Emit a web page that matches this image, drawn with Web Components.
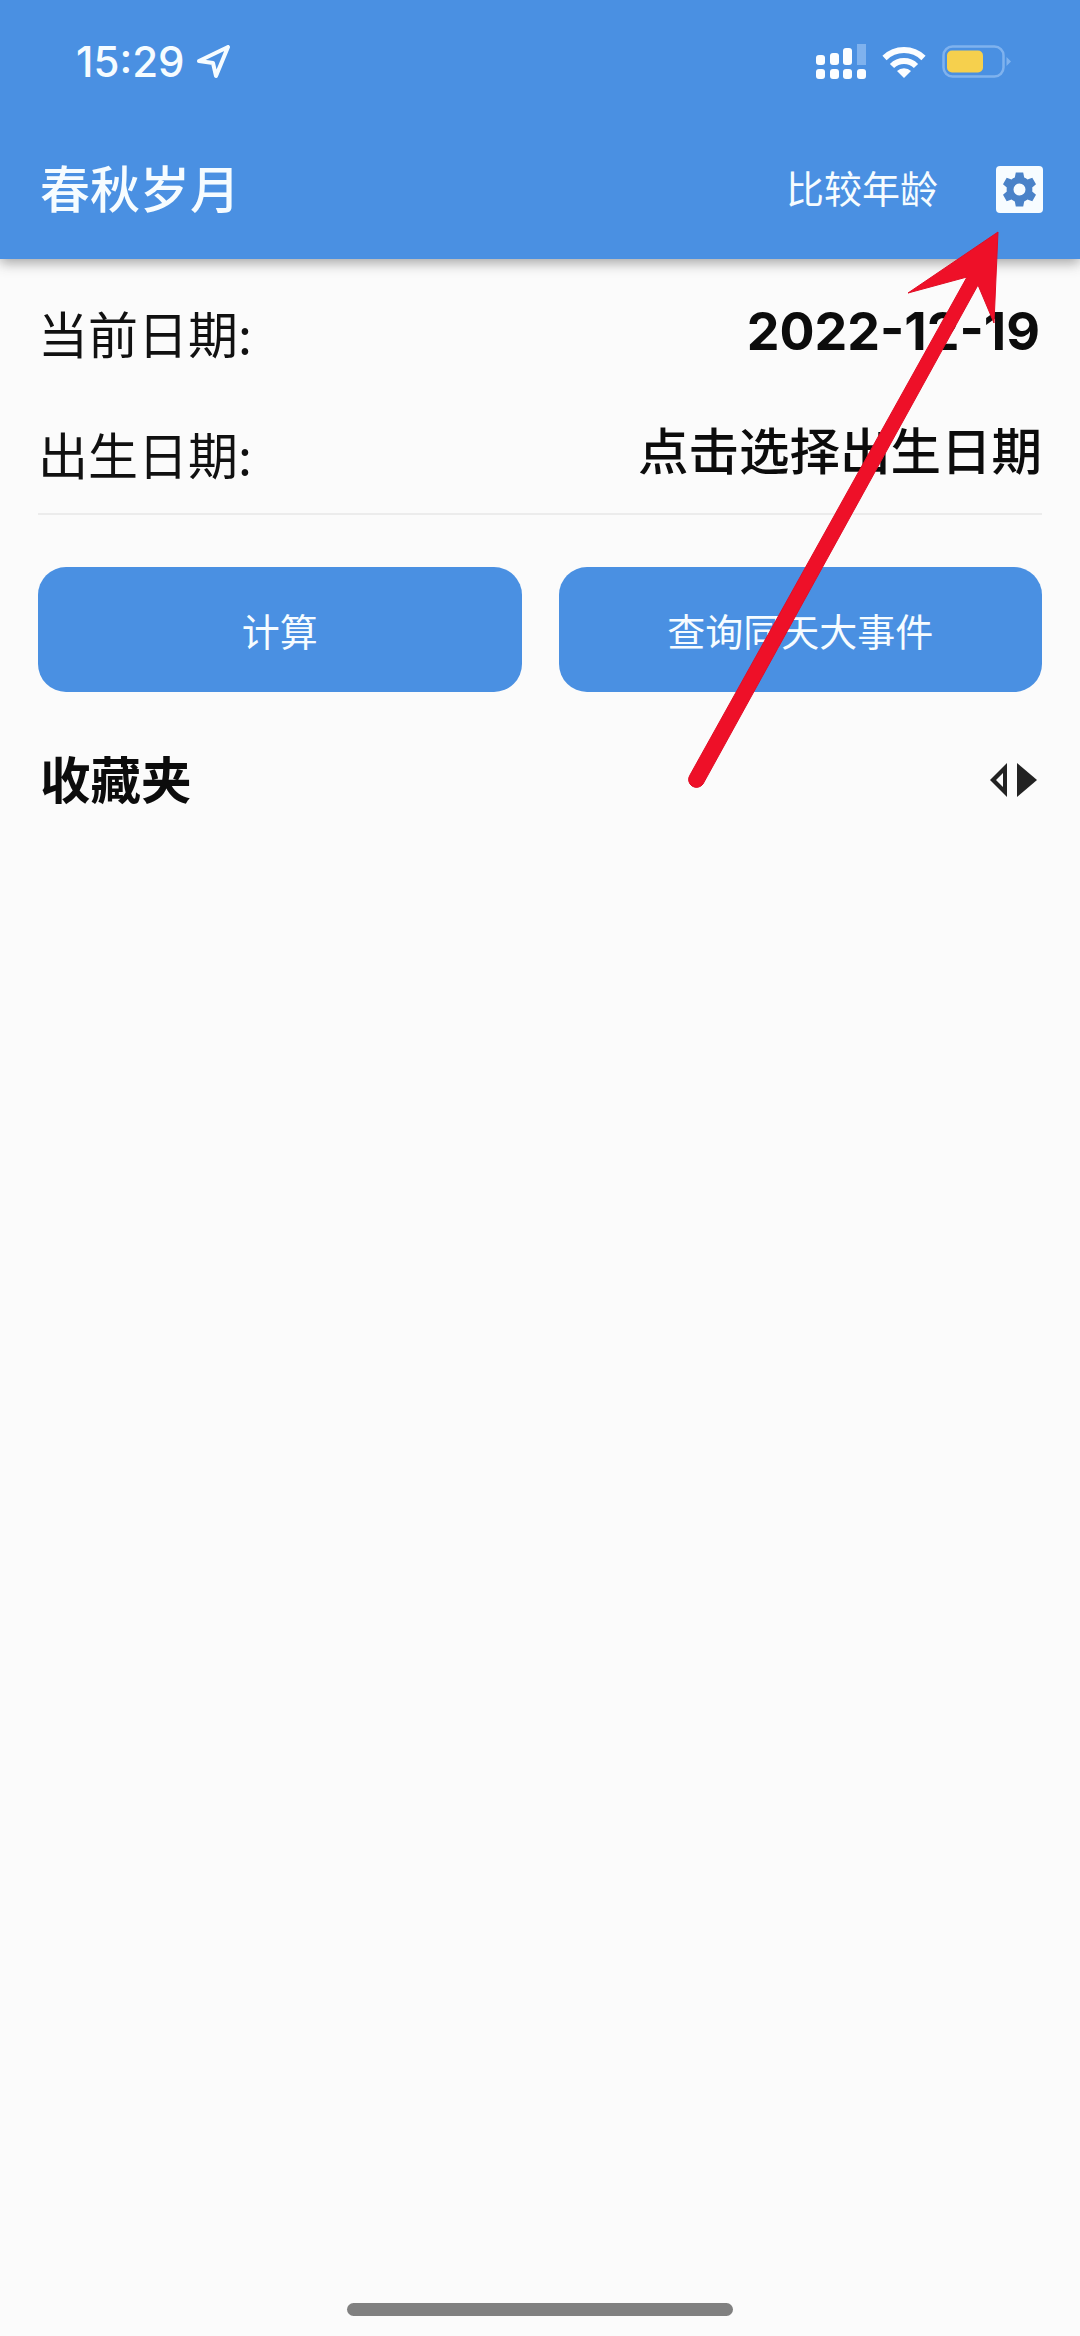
<!DOCTYPE html>
<html lang="zh-CN"><head><meta charset="utf-8">
<style>
html,body{margin:0;padding:0;background:#fbfbfb}
body{width:1080px;height:2336px;overflow:hidden;font-family:"Inter","Noto Sans CJK SC",sans-serif}
</style></head>
<body>
<x-app>
  <x-appbar title="春秋岁月" action="比较年龄"></x-appbar>
  <x-info-row first label="当前日期:" value="2022-12-19"></x-info-row>
  <x-info-row last label="出生日期:" value="点击选择出生日期"></x-info-row>
  <x-buttons><x-btn>计算</x-btn><x-btn>查询同天大事件</x-btn></x-buttons>
  <x-section title="收藏夹"></x-section>
</x-app>
<script>
function def(name,html,init){
  customElements.define(name,class extends HTMLElement{
    constructor(){super();this.attachShadow({mode:'open'}).innerHTML=html;}
    connectedCallback(){if(init)init(this,this.shadowRoot);}
  });
}
def('x-status-bar',`<style>
:host{display:flex;align-items:center;justify-content:space-between;height:124px;padding:0 68px 0 76px;box-sizing:border-box;color:#f6fcff}
.l{display:flex;align-items:center;gap:12px;font:500 42px/1 Inter,sans-serif}
.r{display:flex;align-items:center;gap:16px}
svg{display:block}
</style>
<div class="l"><span>15:29</span>
<svg width="34" height="34" viewBox="0 0 34 34"><path d="M3 16 L32 2 L20 31 L17 18 Z" fill="none" stroke="#f6fcff" stroke-width="4" stroke-linejoin="round"/></svg></div>
<div class="r">
<svg width="50" height="36" viewBox="0 0 50 36" fill="#fbfdff"><rect x="0" y="11" width="9" height="10" rx="3"/><rect x="14" y="9" width="9" height="12" rx="3"/><rect x="27" y="4" width="9" height="17" rx="3"/><rect x="41" y="0" width="9" height="21" fill="#7fb2ee"/><rect x="0" y="25" width="9" height="10" rx="3"/><rect x="14" y="25" width="9" height="10" rx="3"/><rect x="27" y="25" width="9" height="10" rx="3"/><rect x="41" y="25" width="9" height="10" rx="3"/></svg>
<svg width="44" height="34" viewBox="0 0 44 34"><path d="M2.500 13 A28 28 0 0 1 41.500 13" fill="none" stroke="#fbfdff" stroke-width="6"/><path d="M10 21 A17 17 0 0 1 34 21" fill="none" stroke="#fbfdff" stroke-width="6"/><path d="M15 26 A10 10 0 0 1 29 26 L22 33 Z" fill="#fbfdff"/></svg>
<svg width="70" height="34" viewBox="0 0 70 34"><rect x="1.500" y="1.500" width="60" height="30" rx="9" fill="none" stroke="#7fb2ee" stroke-width="2.500"/><rect x="5" y="5.500" width="36" height="22" rx="5" fill="#f6d04d"/><path d="M64.500 12 L69 16.500 L64.500 21 Z" fill="#7fb2ee"/></svg>
</div>`);
def('x-appbar',`<style>
:host{display:block;background:#4a90e2;height:259px;box-shadow:0 4px 12px rgba(60,60,60,.45);position:relative;color:#f6fcff}
.row{display:flex;align-items:center;justify-content:space-between;height:130px;padding:0 37px 0 40px;box-sizing:border-box}
.t{font:500 50px/1 "Noto Sans CJK SC",sans-serif;margin-bottom:6px}
.a{display:flex;align-items:center;gap:58px}
.s{font:400 38px/1 "Noto Sans CJK SC",sans-serif;margin-bottom:4px}
svg{display:block}
</style>
<x-status-bar></x-status-bar>
<div class="row"><span class="t"></span><div class="a"><span class="s"></span>
<svg width="47" height="47" viewBox="0 0 47 47"><rect width="47" height="47" rx="4" fill="#f7fcff"/><path fill="#4a82c8" fill-rule="evenodd" d="M19.800 6.500h7.400l1 5a12.500 12.500 0 0 1 3.300 1.900l4.800-1.600 3.700 6.400-3.800 3.400a12.500 12.500 0 0 1 0 3.800l3.800 3.400-3.700 6.400-4.800-1.600a12.500 12.500 0 0 1-3.300 1.900l-1 5h-7.400l-1-5a12.500 12.500 0 0 1-3.300-1.900l-4.800 1.600-3.700-6.400 3.800-3.400a12.500 12.500 0 0 1 0-3.800l-3.800-3.400 3.700-6.400 4.800 1.600a12.500 12.500 0 0 1 3.300-1.900zM23.500 17.500a6 6 0 1 0 0 12 6 6 0 0 0 0-12z"/></svg></div></div>`,
(h,r)=>{r.querySelector('.t').textContent=h.getAttribute('title');r.querySelector('.s').textContent=h.getAttribute('action');});
def('x-info-row',`<style>
:host{display:flex;align-items:center;justify-content:space-between;margin:0 38px;height:121px;color:#111}
:host([first]){margin-top:12px}
:host([last]){border-bottom:2px solid #ececec}
.l{font:400 50px/1 "Noto Sans CJK SC",sans-serif}
.v{font:700 52px/1 Inter,"Noto Sans CJK SC",sans-serif;color:#0c0c0c;margin-right:2px}
:host([last]) .v{font-size:50.500px;font-weight:500;margin-right:0}
</style><span class="l"></span><span class="v"></span>`,
(h,r)=>{r.querySelector('.l').textContent=h.getAttribute('label');r.querySelector('.v').textContent=h.getAttribute('value');});
def('x-buttons',`<style>:host{display:grid;grid-template-columns:1fr 1fr;gap:37px;padding:0 38px;margin-top:52px}</style><slot></slot>`);
def('x-btn',`<style>:host{display:flex;align-items:center;justify-content:center;height:125px;background:#4a90e2;border-radius:28px;color:#f6fcff;font:400 38px/1 "Noto Sans CJK SC",sans-serif}</style><slot></slot>`);
def('x-section',`<style>
:host{display:flex;align-items:center;justify-content:space-between;padding:0 43px 0 40px;margin-top:60px;height:50px;color:#0c0c0c}
.t{font:700 50.500px/1 "Noto Sans CJK SC",sans-serif}
svg{display:block;margin-top:6px}
</style><span class="t"></span>
<svg width="47" height="34" viewBox="0 0 47 34"><path d="M0 17 L17 0 V34 Z M6 17 L13 24 V10 Z" fill="#222" fill-rule="evenodd"/><path d="M27 0 L47 17 L27 34 Z" fill="#222"/></svg>`,
(h,r)=>{r.querySelector('.t').textContent=h.getAttribute('title');});
def('x-home-bar',`<style>:host{position:absolute;left:347px;top:2303px;width:386px;height:13px;background:#808080;border-radius:7px}</style>`);
def('x-arrow',`<style>:host{position:absolute;left:0;top:0;width:1080px;height:2336px;pointer-events:none}svg{display:block}</style>
<svg width="1080" height="2336" viewBox="0 0 1080 2336"><path d="M998 232 L908 293 L967 277 L690 775 A7.500 7.500 0 0 0 703 784 L978 285 L994 323 Z" fill="#ee1028" stroke="#e00e26" stroke-width="1" stroke-linejoin="round"/></svg>`);
def('x-app',`<style>:host{display:block;position:relative;width:1080px;height:2336px;background:#fbfbfb}</style><slot></slot><x-arrow></x-arrow><x-home-bar></x-home-bar>`);
</script>
</body></html>
